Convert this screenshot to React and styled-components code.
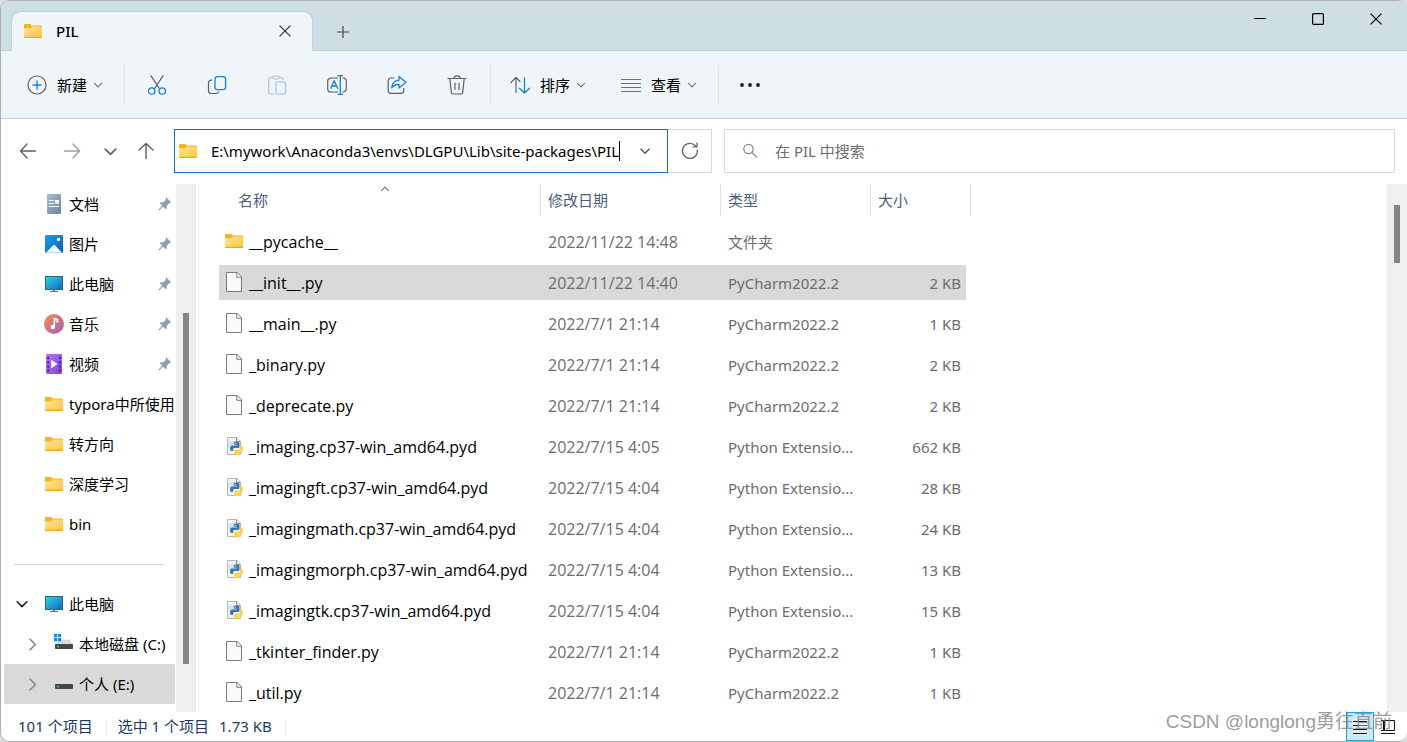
import React from "react";
import styled, { createGlobalStyle, css } from "styled-components";

const GlobalStyle = createGlobalStyle`
  *, *::before, *::after { box-sizing: border-box; }
  body {
    margin: 0;
    background: #dcdfe1;
    font-family: "Noto Sans", "Noto Sans CJK SC", sans-serif;
    font-size: 15px;
    line-height: 20px;
    color: #000;
  }
  button, input { font: inherit; color: inherit; }
  svg { display: block; flex: none; }
`;

/* ---------- window ---------- */

const Window = styled.div`
  position: relative;
  display: flex;
  flex-direction: column;
  height: 100vh;
  overflow: hidden;
  background: #fff;
  border: 1px solid #adb0b2;
  border-right: 0;
  border-radius: 9px;
`;

const TitleBar = styled.header`
  display: flex;
  align-items: stretch;
  height: 50px;
  flex: none;
  padding: 0 2px 0 11px;
  background: #cddfe5;
  border-bottom: 1px solid #bdd0d6;
`;

const Tab = styled.div`
  display: flex;
  align-items: center;
  width: 300px;
  height: 39px;
  margin-top: 11px;
  padding: 0 17px 2px 12px;
  gap: 14px;
  background: #eff5f8;
  border-radius: 9px 9px 0 0;
  box-shadow: 0 0 1px 1px #c0d3d9;
  clip-path: inset(-2px -2px 0 -2px);
`;

const TabTitle = styled.span`
  flex: 1;
  font-weight: 500;
`;

const PlainButton = styled.button`
  display: flex;
  align-items: center;
  justify-content: center;
  padding: 0;
  border: 0;
  background: none;
`;

const TabClose = styled(PlainButton)`
  width: 20px;
  height: 20px;
`;

const NewTab = styled(PlainButton)`
  width: 40px;
  margin-left: 11px;
  padding-top: 13px;
`;

const WindowControls = styled.div`
  display: flex;
  margin-left: auto;
`;

const ControlButton = styled(PlainButton)`
  width: 58px;
  height: 36px;
`;

/* ---------- command bar ---------- */

const CommandBar = styled.div`
  display: flex;
  align-items: center;
  height: 68px;
  flex: none;
  padding-left: 9px;
  background: #eff5f8;
  border-bottom: 1px solid #c3cfd4;
`;

const LabelButton = styled(PlainButton)`
  height: 40px;
  padding: 0 18px 0 17px;
`;

const ButtonLabel = styled.span`
  margin: 0 6px 0 10px;
`;

const IconButton = styled(PlainButton)`
  width: ${(p) => p.$width || 60}px;
  height: 40px;
`;

const Divider = styled.span`
  width: 1px;
  height: 40px;
  margin: 0 2px 0 3px;
  background: #dfe5e9;
`;

/* ---------- address row ---------- */

const NavRow = styled.div`
  display: flex;
  align-items: center;
  height: 65px;
  flex: none;
  padding: 0 12px 1px 5px;
`;

const Fields = styled.div`
  display: grid;
  grid-template-columns: minmax(0, 538fr) minmax(0, 671fr);
  flex: 1;
  gap: 12px;
  margin-left: 8px;
`;

const AddressGroup = styled.form`
  display: flex;
  height: 44px;
`;

const AddressBox = styled.label`
  display: flex;
  align-items: center;
  flex: 1;
  min-width: 0;
  padding: 0 16px 0 4px;
  border: 1px solid #0f72c0;
`;

const AddressInput = styled.input`
  flex: 1;
  min-width: 0;
  margin-left: 4px;
  padding: 0;
  border: 0;
  outline: 0;
  background: none;
  text-align: right;
`;

const Caret = styled.span`
  width: 1px;
  height: 20px;
  margin-right: 19px;
  background: #000;
`;

const Refresh = styled(PlainButton)`
  width: 44px;
  border: 1px solid #d9d9d9;
  border-left: 0;
`;

const SearchBox = styled.label`
  display: flex;
  align-items: center;
  height: 44px;
  padding: 0 16px;
  gap: 16px;
  border: 1px solid #d9d9d9;
`;

const SearchInput = styled.input`
  flex: 1;
  min-width: 0;
  padding: 0;
  border: 0;
  outline: 0;
  background: none;
  &::placeholder { color: #6d6d6d; opacity: 1; }
`;

/* ---------- body ---------- */

const Body = styled.div`
  display: flex;
  flex: 1;
  min-height: 0;
`;

const Sidebar = styled.nav`
  width: 175px;
  flex: none;
  overflow: hidden;
`;

const SideItem = styled.a`
  display: flex;
  align-items: center;
  height: 40px;
  margin: 0 1px 0 3px;
  padding-left: ${(p) => 8 + p.$depth * 10}px;
  border-radius: 2px;
  color: inherit;
  text-decoration: none;
  white-space: nowrap;
  overflow: hidden;
  ${(p) => p.$selected && css`background: #d9d9d9;`}
`;

const Slot = styled.span`
  display: flex;
  align-items: center;
  justify-content: center;
  width: 20px;
  height: 20px;
  flex: none;
`;

const SideIcon = styled(Slot)`
  margin: 0 5px 0 12px;
`;

const SideLabel = styled.span`
  flex: 1 0 auto;
`;

const PinSlot = styled(Slot)`
  width: 14px;
  margin-right: 3px;
`;

const SideRule = styled.hr`
  height: 1px;
  margin: 20px 11px 19px 13px;
  border: 0;
  background: #d5d5d5;
`;

const ScrollTrack = styled.div`
  width: 20px;
  flex: none;
  padding: ${(p) => p.$top}px 6px 0 7px;
  background: #efefef;
`;

const ScrollThumb = styled.div`
  width: 6px;
  height: ${(p) => p.$length}px;
  background: #858585;
`;

const Content = styled.main`
  flex: 1;
  min-width: 0;
  overflow: hidden;
  margin-left: 2px;
  padding-left: 20px;
  border-left: 1px solid #f3f3f3;
`;

const FileTable = styled.table`
  width: 752px;
  table-layout: fixed;
  border-collapse: separate;
  border-spacing: 0;
`;

const HeadCell = styled.th`
  width: ${(p) => p.$width}px;
  padding: 0 0 5px;
  font-weight: 400;
`;

const SortButton = styled(PlainButton)`
  position: relative;
  justify-content: flex-start;
  width: 100%;
  height: 32px;
  padding-left: ${(p) => (p.$first ? 19 : 7)}px;
  border-right: 1px solid #e3e3e3;
  color: #4c607a;
`;

const SortMark = styled.span`
  position: absolute;
  top: 0;
  left: 50%;
`;

const Cell = styled.td`
  height: 41px;
  padding: 0 0 0 7px;
  border: 0 solid transparent;
  border-width: 3px 0;
  background-clip: padding-box;
  color: #6d6d6d;
  white-space: nowrap;
`;

const NameCell = styled(Cell)`
  padding-left: 6px;
  font-family: "Open Sans", "Noto Sans CJK SC", sans-serif;
  font-size: 16px;
  color: #000;
`;

const DateCell = styled(Cell)`
  font-family: "Open Sans", "Noto Sans CJK SC", sans-serif;
  font-size: 16px;
`;

const SizeCell = styled(Cell)`
  padding-left: 0;
  padding-right: 5px;
  border-right-width: 5px;
  text-align: right;
`;

const FileRow = styled.tr`
  ${(p) => p.$selected && css`
    ${Cell} { background-color: #d9d9d9; }
  `}
`;

const FileName = styled.div`
  display: flex;
  align-items: center;
  gap: 6px;
  height: 22px;
  svg { margin-bottom: 2px; }
`;

/* ---------- status bar ---------- */

const StatusBar = styled.footer`
  display: flex;
  align-items: center;
  height: 29px;
  flex: none;
  padding: 0 5px 0 17px;
  color: #1e395b;
`;

const StatusText = styled.span`
  padding: 0 ${(p) => p.$end || 13}px 2px 0;
`;

const StatusRule = styled.span`
  width: 1px;
  height: 14px;
  margin-right: 11px;
  background: #e8e8e8;
`;

const Views = styled.div`
  display: flex;
  align-self: stretch;
  margin-left: auto;
`;

const ViewButton = styled(PlainButton)`
  width: 28px;
  height: 29px;
  border: 1px solid ${(p) => (p.$active ? "#26a0da" : "transparent")};
  background: ${(p) => (p.$active ? "#cce8f6" : "none")};
`;

const Watermark = styled.span`
  position: absolute;
  right: 15px;
  bottom: 7px;
  font-family: "Liberation Sans", "Noto Sans CJK SC", sans-serif;
  font-size: 19px;
  line-height: 24px;
  color: rgba(130, 130, 130, 0.8);
  pointer-events: none;
`;

/* ---------- icons ---------- */

const INK = "#5b5f63";
const BLUE = "#1480d8";

const Icon = ({ w = 20, h = 20, children, ...rest }) => (
  <svg width={w} height={h} viewBox={`0 0 ${w} ${h}`} fill="none" aria-hidden="true" {...rest}>
    {children}
  </svg>
);

const Chevron = ({ size = 10, color = "#6b6f73", dir = "down", weight = 1.1 }) => {
  const turn = { down: 0, up: 180, right: -90 }[dir];
  return (
    <svg width={size} height={size} viewBox="0 0 10 10" fill="none" aria-hidden="true">
      <path d="M1.5 3.4 5 6.9 8.5 3.4" stroke={color} strokeWidth={weight} transform={`rotate(${turn} 5 5)`} strokeLinecap="round" strokeLinejoin="round" />
    </svg>
  );
};

const Cross = ({ size = 12, color = "#222" }) => (
  <Icon w={size} h={size}>
    <path d={`M.6.6 ${size - 0.6} ${size - 0.6}M${size - 0.6}.6.6 ${size - 0.6}`} stroke={color} strokeWidth="1.2" />
  </Icon>
);

const FolderIcon = () => (
  <Icon w={18} h={16}>
    <defs>
      <linearGradient id="folder" x1="0" y1="0" x2="1" y2="1">
        <stop offset="0" stopColor="#ffe59e" />
        <stop offset="1" stopColor="#fcc537" />
      </linearGradient>
    </defs>
    <path d="M0 2a1 1 0 0 1 1-1h5.2l1.6 1.4H17a1 1 0 0 1 1 1V8H0z" fill="#f6b31c" />
    <path d="M0 5.2h6.2L8 3.6h9a1 1 0 0 1 1 1V14a1 1 0 0 1-1 1H1a1 1 0 0 1-1-1z" fill="url(#folder)" />
    <path d="M0 13.8h18V14a1 1 0 0 1-1 1H1a1 1 0 0 1-1-1z" fill="#eda91d" />
  </Icon>
);

const FileIcon = () => (
  <Icon w={18} h={22}>
    <path d="M1.5 1.5h10.8l4.2 4.3v14.7h-15z" fill="#fafafa" stroke="#7a7a76" />
    <path d="M11.8 1.5v4.8h4.7" stroke="#7a7a76" />
  </Icon>
);

const PythonIcon = () => (
  <Icon w={18} h={22}>
    <path d="M2.5 2.5h9.3l3.7 3.7v13.3h-13z" fill="#f4f5f6" stroke="#b4b7b9" />
    <path d="M11.5 2.5v4h4" stroke="#8f9294" />
    <circle cx="6.5" cy="9.5" r="3.8" fill="#d5e4ef" />
    <path d="M8.8 7.600c.3-1.400 5.400-1.400 5.700.4v3.600c0 1-.6 1.500-1.600 1.500H9.600c-1.100 0-1.500.8-1.500 1.700v1.300H6.600c-2 0-2.200-5.300.2-5.700h5v-.6h-3z" fill="#3b76a8" />
    <path d="M15.300 10.600h1.300c2 .4 1.800 6-.1 6.100h-4.200v.6h2.900v1.700c-.4 1.800-5.600 1.800-6 0v-3c0-.9.6-1.500 1.500-1.500h3.100c.9 0 1.500-.7 1.500-1.600z" fill="#fdd542" />
    <circle cx="10.200" cy="8.300" r=".6" fill="#fff" />
  </Icon>
);

const DocumentIcon = () => (
  <Icon>
    <defs>
      <linearGradient id="doc" x1="0" y1="0" x2="1" y2="1">
        <stop offset="0" stopColor="#a9bdd2" />
        <stop offset="1" stopColor="#6785a5" />
      </linearGradient>
    </defs>
    <rect x="3" y="0" width="14" height="20" rx="1.2" fill="url(#doc)" />
    <path d="M5 6.500h5M5 9.500h5M5 12.500h10" stroke="#fff" strokeWidth="1.2" />
    <rect x="11" y="6" width="4" height="3.6" fill="#fff" />
  </Icon>
);

const PictureIcon = () => (
  <Icon>
    <defs>
      <linearGradient id="pic" x1="0" y1="0" x2="1" y2="1">
        <stop offset="0" stopColor="#1c9ce6" />
        <stop offset="1" stopColor="#0961b4" />
      </linearGradient>
    </defs>
    <rect x="1" y="1" width="18" height="18" rx="1.2" fill="url(#pic)" />
    <path d="M2 18.800 9 11.200q1-1 2 0l7 7.600z" fill="#f5faff" />
    <circle cx="14.500" cy="5.500" r="1.7" fill="#fff" />
  </Icon>
);

const MonitorIcon = () => (
  <Icon>
    <defs>
      <linearGradient id="pc" x1="0" y1="0" x2="1" y2="1">
        <stop offset="0" stopColor="#36d7e4" />
        <stop offset="1" stopColor="#0c66c0" />
      </linearGradient>
    </defs>
    <rect x="1.500" y="2.500" width="17" height="13" fill="url(#pc)" stroke="#27658c" />
    <path d="M9 16h2v1.500H9z" fill="#7e8b96" />
    <path d="M6 17.500h8" stroke="#5f6b76" strokeWidth="1.2" />
  </Icon>
);

const MusicIcon = () => (
  <Icon>
    <defs>
      <linearGradient id="music" x1="0" y1="0" x2="1" y2="1">
        <stop offset=".1" stopColor="#ee8853" />
        <stop offset=".9" stopColor="#ad62ae" />
      </linearGradient>
    </defs>
    <circle cx="10" cy="10" r="10" fill="url(#music)" />
    <circle cx="8.800" cy="13" r="2.200" fill="#fff" />
    <path d="M10.300 13V4.500l3.200 1v2.200l-2-.6" stroke="#fff" strokeWidth="1.500" />
  </Icon>
);

const VideoIcon = () => (
  <Icon>
    <defs>
      <linearGradient id="video" x1="0" y1="0" x2="1" y2="1">
        <stop offset="0" stopColor="#b273ef" />
        <stop offset="1" stopColor="#8445d6" />
      </linearGradient>
    </defs>
    <rect x="2" y="0" width="16" height="20" rx="1" fill="url(#video)" />
    <path d="M4.200 3v15M15.800 3v15" stroke="#43207f" strokeWidth="2" strokeDasharray="2 2.200" />
    <path d="m7.300 5.800 6.200 4.200-6.200 4.200z" fill="#fff" />
  </Icon>
);

const DriveIcon = ({ system }) => (
  <Icon>
    <path d="M4 5.500h12.500L19 11H1z" fill="#d9dce0" />
    <rect x="1" y="10" width="18" height="5" rx=".8" fill="#45484b" />
    <path d="M3 12.500h2" stroke="#2ee04f" strokeWidth="1.500" />
    {system && <path d="M0 0h3.200v3.200H0zM4 0h3.200v3.200H4zM0 4h3.200v3.200H0zM4 4h3.200v3.200H4z" fill="#1689dc" />}
  </Icon>
);

const PinIcon = () => (
  <Icon w={14} h={14}>
    <path d="M8.300.6 13.200 5.300 12.300 6.300 11.300 6 8.800 8.800 8.800 11.300 7.800 12.300 5.200 9.700 1.300 13.300.5 13.400.6 12.600 4.200 8.700 1.800 6.200 2.800 5.200 5.300 5.200 8 2.700 7.500 1.600z" fill="#93a0aa" />
  </Icon>
);

const PlusCircle = () => (
  <Icon>
    <circle cx="10" cy="10" r="9" stroke={INK} strokeWidth="1.2" />
    <path d="M10 6v8M6 10h8" stroke={BLUE} strokeWidth="1.3" strokeLinecap="round" />
  </Icon>
);

const CutIcon = () => (
  <Icon>
    <path d="M4 .8 12.700 14M16 .8 7.300 14" stroke={INK} strokeWidth="1.2" strokeLinecap="round" />
    <circle cx="4.700" cy="16" r="3.200" stroke={BLUE} strokeWidth="1.3" />
    <circle cx="15.300" cy="16" r="3.200" stroke={BLUE} strokeWidth="1.3" />
  </Icon>
);

const CopyIcon = () => (
  <Icon>
    <path d="M5 5.200H4a2.500 2.500 0 0 0-2.500 2.500v8A2.800 2.800 0 0 0 4.300 18.500h5.200a2.500 2.500 0 0 0 2.300-2" stroke={INK} strokeWidth="1.2" />
    <rect x="8" y="1.600" width="10.600" height="13" rx="2.500" stroke={BLUE} strokeWidth="1.3" />
  </Icon>
);

const PasteIcon = () => (
  <Icon>
    <path d="M6 2.500H3.200a1.500 1.500 0 0 0-1.500 1.500v13.500a1.500 1.500 0 0 0 1.500 1.500H7M12 2.500h2.500A1.500 1.500 0 0 1 16 4v1" stroke="#b9bec2" strokeWidth="1.2" />
    <rect x="5.800" y="1" width="6.400" height="3" rx="1.500" stroke="#b9bec2" strokeWidth="1.2" />
    <rect x="9" y="6.800" width="9.500" height="12.400" rx="1.500" stroke="#9bcbf0" strokeWidth="1.3" />
  </Icon>
);

const RenameIcon = () => (
  <Icon>
    <path d="M11 3H4A3.300 3.300 0 0 0 .7 6.300v7.400A3.300 3.300 0 0 0 4 17h7M15.500 3h.5a3.300 3.300 0 0 1 3.300 3.300v7.400A3.300 3.300 0 0 1 16 17h-.5" stroke={INK} strokeWidth="1.2" />
    <path d="M3.600 13.700 7.200 5.700l3.600 8M4.900 11h4.600" stroke={BLUE} strokeWidth="1.3" strokeLinejoin="round" />
    <path d="M13.300 1v18M10.500.7h5.600M10.500 19.300h5.600" stroke={BLUE} strokeWidth="1.3" />
  </Icon>
);

const ShareIcon = () => (
  <Icon>
    <path d="M7.500 3H4A2.800 2.800 0 0 0 1.200 5.800v9.700A2.800 2.800 0 0 0 4 18.300h10a2.800 2.800 0 0 0 2.800-2.800V13" stroke={INK} strokeWidth="1.2" />
    <path d="M12 1.500 19 7.300 12 13v-3.500c-3.500-.2-5.700.8-7.300 3.300.3-4.500 2.800-7.300 7.300-7.700z" stroke={BLUE} strokeWidth="1.3" strokeLinejoin="round" />
  </Icon>
);

const TrashIcon = () => (
  <Icon>
    <path d="M1 3.500h18M7 3.300a3 2.500 0 0 1 6 0M2.800 3.800l1.500 13.300a2 2 0 0 0 2 1.900h7.400a2 2 0 0 0 2-1.900L17.200 3.800M8 8v6.500M12 8v6.500" stroke={INK} strokeWidth="1.2" strokeLinecap="round" />
  </Icon>
);

const SortIcon = () => (
  <Icon>
    <path d="M6 17.500V2.500M.8 7.700 6 2.500l4 4" stroke={INK} strokeWidth="1.2" strokeLinecap="round" strokeLinejoin="round" />
    <path d="M14.500 3v15M9.500 13.200l5 4.800 5-4.800" stroke={BLUE} strokeWidth="1.3" strokeLinecap="round" strokeLinejoin="round" />
  </Icon>
);

const ListIcon = () => (
  <Icon>
    <path d="M0 4.500h20M0 8.500h20M0 12.500h20M0 16.500h20" stroke="#6f6f76" strokeWidth="1.1" />
  </Icon>
);

const MoreIcon = () => (
  <Icon>
    <circle cx="2" cy="10" r="1.900" fill="#1c1c1c" />
    <circle cx="10" cy="10" r="1.900" fill="#1c1c1c" />
    <circle cx="18" cy="10" r="1.900" fill="#1c1c1c" />
  </Icon>
);

const Arrow = ({ turn = 0, color = "#5f5f5f" }) => (
  <Icon>
    <path d="M17.500 10H2.500M9 3 2.500 10 9 17" transform={`rotate(${turn} 10 10)`} stroke={color} strokeWidth="1.4" strokeLinecap="round" strokeLinejoin="round" />
  </Icon>
);

const RefreshIcon = () => (
  <Icon>
    <path d="M17.300 8.500A7.500 7.500 0 1 1 14.500 4l2 1.500" stroke="#666" strokeWidth="1.3" />
    <path d="M17 1.500v4.300h-4.400" stroke="#666" strokeWidth="1.3" />
  </Icon>
);

const SearchIcon = () => (
  <Icon w={18} h={18}>
    <circle cx="7.500" cy="7" r="4.700" stroke="#7d858c" strokeWidth="1.2" />
    <path d="m11 10.500 4.800 4.800" stroke="#7d858c" strokeWidth="1.2" />
  </Icon>
);

const DetailsViewIcon = () => (
  <Icon w={18} h={18}>
    <rect x="1" y="1" width="16" height="16" fill="#e3eff6" />
    <path d="M2 3.500h14M2 7.500h14M2 11.500h14M2 15.500h14" stroke="#111" />
  </Icon>
);

const TilesViewIcon = () => (
  <Icon w={18} h={18}>
    <path d="M5.500 2.500h10v10h-10zM2 2.500h2.500v10H2M2 15.500h14" stroke="#111" />
  </Icon>
);

/* ---------- data ---------- */

const quickAccess = [
  { name: "文档", icon: DocumentIcon, pinned: true },
  { name: "图片", icon: PictureIcon, pinned: true },
  { name: "此电脑", icon: MonitorIcon, pinned: true },
  { name: "音乐", icon: MusicIcon, pinned: true },
  { name: "视频", icon: VideoIcon, pinned: true },
  { name: "typora中所使用", icon: FolderIcon },
  { name: "转方向", icon: FolderIcon },
  { name: "深度学习", icon: FolderIcon },
  { name: "bin", icon: FolderIcon },
];

const columns = [
  { label: "名称", width: 322 },
  { label: "修改日期", width: 180 },
  { label: "类型", width: 150 },
  { label: "大小", width: 100 },
];

const PY = "PyCharm2022.2";
const EXT = "Python Extensio...";

const files = [
  { name: "__pycache__", date: "2022/11/22 14:48", type: "文件夹", size: "", icon: FolderIcon },
  { name: "__init__.py", date: "2022/11/22 14:40", type: PY, size: "2 KB", icon: FileIcon, selected: true },
  { name: "__main__.py", date: "2022/7/1 21:14", type: PY, size: "1 KB", icon: FileIcon },
  { name: "_binary.py", date: "2022/7/1 21:14", type: PY, size: "2 KB", icon: FileIcon },
  { name: "_deprecate.py", date: "2022/7/1 21:14", type: PY, size: "2 KB", icon: FileIcon },
  { name: "_imaging.cp37-win_amd64.pyd", date: "2022/7/15 4:05", type: EXT, size: "662 KB", icon: PythonIcon },
  { name: "_imagingft.cp37-win_amd64.pyd", date: "2022/7/15 4:04", type: EXT, size: "28 KB", icon: PythonIcon },
  { name: "_imagingmath.cp37-win_amd64.pyd", date: "2022/7/15 4:04", type: EXT, size: "24 KB", icon: PythonIcon },
  { name: "_imagingmorph.cp37-win_amd64.pyd", date: "2022/7/15 4:04", type: EXT, size: "13 KB", icon: PythonIcon },
  { name: "_imagingtk.cp37-win_amd64.pyd", date: "2022/7/15 4:04", type: EXT, size: "15 KB", icon: PythonIcon },
  { name: "_tkinter_finder.py", date: "2022/7/1 21:14", type: PY, size: "1 KB", icon: FileIcon },
  { name: "_util.py", date: "2022/7/1 21:14", type: PY, size: "1 KB", icon: FileIcon },
];

const SideEntry = ({ name, icon: Glyph, pinned, depth = 0, chevron, selected, system }) => (
  <SideItem href="#" $depth={depth} $selected={selected}>
    <Slot>
      {chevron && (
        <Chevron
          size={chevron === "down" ? 14 : 15}
          dir={chevron}
          color={chevron === "down" ? "#222" : "#858585"}
        />
      )}
    </Slot>
    <SideIcon><Glyph system={system} /></SideIcon>
    <SideLabel>{name}</SideLabel>
    {pinned && <PinSlot><PinIcon /></PinSlot>}
  </SideItem>
);

export default function App() {
  return (
    <>
      <GlobalStyle />
      <Window>
        <TitleBar>
          <Tab>
            <FolderIcon />
            <TabTitle>PIL</TabTitle>
            <TabClose aria-label="关闭标签页"><Cross color="#333" /></TabClose>
          </Tab>
          <NewTab aria-label="新建标签页">
            <Icon w={12} h={12}><path d="M6 0v12M0 6h12" stroke="#444" strokeWidth="1.2" /></Icon>
          </NewTab>
          <WindowControls>
            <ControlButton aria-label="最小化">
              <Icon w={12} h={12}><path d="M0 5.500h12" stroke="#000" /></Icon>
            </ControlButton>
            <ControlButton aria-label="最大化">
              <Icon w={12} h={12}><rect x=".6" y=".6" width="10.800" height="10.800" rx="1" stroke="#000" strokeWidth="1.2" /></Icon>
            </ControlButton>
            <ControlButton aria-label="关闭"><Cross color="#000" /></ControlButton>
          </WindowControls>
        </TitleBar>

        <CommandBar>
          <LabelButton><PlusCircle /><ButtonLabel>新建</ButtonLabel><Chevron /></LabelButton>
          <Divider />
          <IconButton aria-label="剪切"><CutIcon /></IconButton>
          <IconButton aria-label="复制"><CopyIcon /></IconButton>
          <IconButton aria-label="粘贴"><PasteIcon /></IconButton>
          <IconButton aria-label="重命名"><RenameIcon /></IconButton>
          <IconButton aria-label="共享"><ShareIcon /></IconButton>
          <IconButton aria-label="删除"><TrashIcon /></IconButton>
          <Divider />
          <LabelButton><SortIcon /><ButtonLabel>排序</ButtonLabel><Chevron /></LabelButton>
          <LabelButton><ListIcon /><ButtonLabel>查看</ButtonLabel><Chevron /></LabelButton>
          <Divider />
          <IconButton aria-label="更多" $width={58}><MoreIcon /></IconButton>
        </CommandBar>

        <NavRow>
          <IconButton aria-label="后退" $width={44}><Arrow /></IconButton>
          <IconButton aria-label="前进" $width={44}><Arrow turn={180} color="#a0a0a0" /></IconButton>
          <IconButton aria-label="最近位置" $width={32}><Chevron size={15} color="#5f5f5f" /></IconButton>
          <IconButton aria-label="上移" $width={40}><Arrow turn={90} /></IconButton>
          <Fields>
            <AddressGroup onSubmit={(e) => e.preventDefault()}>
              <AddressBox>
                <FolderIcon />
                <AddressInput
                  aria-label="地址"
                  spellCheck={false}
                  defaultValue={"E:\\mywork\\Anaconda3\\envs\\DLGPU\\Lib\\site-packages\\PIL"}
                />
                <Caret />
                <Chevron size={12} color="#555" />
              </AddressBox>
              <Refresh type="button" aria-label="刷新"><RefreshIcon /></Refresh>
            </AddressGroup>
            <SearchBox>
              <SearchIcon />
              <SearchInput aria-label="搜索" placeholder="在 PIL 中搜索" />
            </SearchBox>
          </Fields>
        </NavRow>

        <Body>
          <Sidebar>
            {quickAccess.map((item) => <SideEntry key={item.name} {...item} />)}
            <SideRule />
            <SideEntry name="此电脑" icon={MonitorIcon} chevron="down" />
            <SideEntry name="本地磁盘 (C:)" icon={DriveIcon} chevron="right" depth={1} system />
            <SideEntry name="个人 (E:)" icon={DriveIcon} chevron="right" depth={1} selected />
          </Sidebar>
          <ScrollTrack $top={129}><ScrollThumb $length={351} /></ScrollTrack>
          <Content>
            <FileTable>
              <thead>
                <tr>
                  {columns.map((col, i) => (
                    <HeadCell key={col.label} $width={col.width}>
                      <SortButton $first={i === 0}>
                        {col.label}
                        {i === 0 && <SortMark><Chevron dir="up" /></SortMark>}
                      </SortButton>
                    </HeadCell>
                  ))}
                </tr>
              </thead>
              <tbody>
                {files.map((f) => (
                  <FileRow key={f.name} $selected={f.selected}>
                    <NameCell><FileName><f.icon />{f.name}</FileName></NameCell>
                    <DateCell>{f.date}</DateCell>
                    <Cell>{f.type}</Cell>
                    <SizeCell>{f.size}</SizeCell>
                  </FileRow>
                ))}
              </tbody>
            </FileTable>
          </Content>
          <ScrollTrack $top={21}><ScrollThumb $length={58} /></ScrollTrack>
        </Body>

        <StatusBar>
          <StatusText>101 个项目</StatusText>
          <StatusRule />
          <StatusText $end={10}>选中 1 个项目</StatusText>
          <StatusText>1.73 KB</StatusText>
          <StatusRule />
          <Views>
            <ViewButton $active aria-label="详细信息"><DetailsViewIcon /></ViewButton>
            <ViewButton aria-label="大缩略图"><TilesViewIcon /></ViewButton>
          </Views>
        </StatusBar>
        <Watermark>CSDN @longlong勇往直前</Watermark>
      </Window>
    </>
  );
}
